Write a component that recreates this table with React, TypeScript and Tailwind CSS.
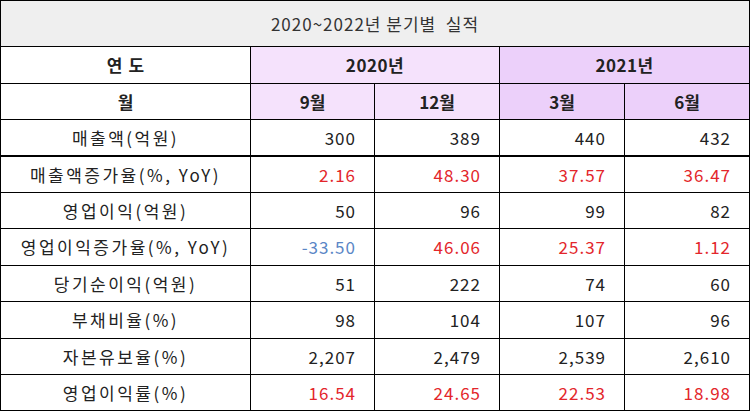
const FONT = "font-['Noto_Sans_CJK_KR',sans-serif]"

type Row = {
  label: string
  values: string[]
  thick?: boolean
  tall?: boolean
}

const rows: Row[] = [
  { label: '매출액(억원)', values: ['300', '389', '440', '432'], thick: true },
  { label: '매출액증가율(%, YoY)', values: ['2.16', '48.30', '37.57', '36.47'], tall: true },
  { label: '영업이익(억원)', values: ['50', '96', '99', '82'] },
  { label: '영업이익증가율(%, YoY)', values: ['-33.50', '46.06', '25.37', '1.12'], tall: true },
  { label: '당기순이익(억원)', values: ['51', '222', '74', '60'] },
  { label: '부채비율(%)', values: ['98', '104', '107', '96'], tall: true },
  { label: '자본유보율(%)', values: ['2,207', '2,479', '2,539', '2,610'] },
  { label: '영업이익률(%)', values: ['16.54', '24.65', '22.53', '18.98'] },
]

// rows whose numbers are coloured by sign
const colored = new Set(['매출액증가율(%, YoY)', '영업이익증가율(%, YoY)', '영업이익률(%)'])

function valueColor(label: string, v: string) {
  if (!colored.has(label)) return 'text-[#222]'
  return v.startsWith('-') ? 'text-[#5a86c6]' : 'text-[#e3262b]'
}

export default function App() {
  return (
    <div className={`w-[751px] h-[412px] bg-white ${FONT}`}>
      <table className="w-[749px] table-fixed border-collapse border border-black text-[#222]">
        <colgroup>
          <col className="w-[250px]" />
          <col className="w-[124px]" />
          <col className="w-[125px]" />
          <col className="w-[125px]" />
          <col className="w-[125px]" />
        </colgroup>
        <tbody>
          <tr className="h-[46px] bg-[#efefef]">
            <td colSpan={5} className="border border-black text-center text-[17px] text-[#333] tracking-[1px]">
              2020~2022년 분기별&nbsp; 실적
            </td>
          </tr>
          <tr className="h-[37px] text-[17px] font-bold">
            <td className="border border-black bg-white text-center tracking-[6px] pl-[6px]">연도</td>
            <td colSpan={2} className="border border-black bg-[#f5e2fc] text-center tracking-[0.5px]">2020년</td>
            <td colSpan={2} className="border border-black bg-[#ecd0fa] text-center tracking-[0.5px]">2021년</td>
          </tr>
          <tr className="h-[36px] text-[17px] font-bold">
            <td className="border border-black bg-white text-center">월</td>
            <td className="border border-black bg-[#f5e2fc] text-center">9월</td>
            <td className="border border-black bg-[#f5e2fc] text-center">12월</td>
            <td className="border border-black bg-[#ecd0fa] text-center">3월</td>
            <td className="border border-black bg-[#ecd0fa] text-center">6월</td>
          </tr>
          {rows.map((r) => (
            <tr key={r.label} className={`${r.tall ? 'h-[37px]' : 'h-[36px]'} text-[17px]`}>
              <td
                className={`border border-black text-center tracking-[2.5px] ${
                  r.thick ? 'border-b-2' : ''
                }`}
              >
                {r.label}
              </td>
              {r.values.map((v, i) => (
                <td
                  key={i}
                  className={`border border-black text-right pr-[18px] tracking-[1px] ${valueColor(
                    r.label,
                    v,
                  )} ${r.thick ? 'border-b-2' : ''}`}
                >
                  {v}
                </td>
              ))}
            </tr>
          ))}
        </tbody>
      </table>
    </div>
  )
}
